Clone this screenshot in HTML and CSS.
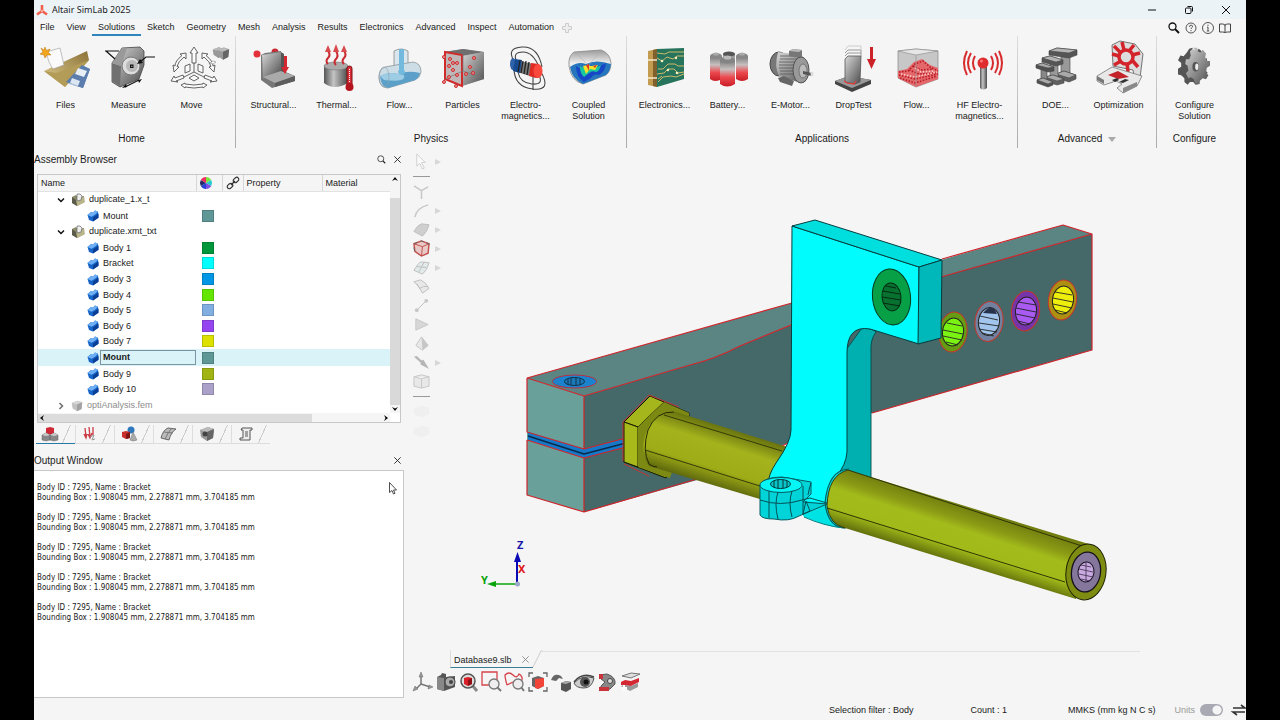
FILE: index.html
```html
<!DOCTYPE html>
<html lang="en">
<head>
    <meta charset="UTF-8">
    <meta name="viewport" content="width=device-width, initial-scale=1.0">
    <title>Altair SimLab 2025</title>
    <link rel="stylesheet" href="styles.css">
</head>
<body>
    <!-- Shared gradients and symbols -->
    <svg class="defs" aria-hidden="true">
        <defs>
            <linearGradient id="metal" x1="0" y1="0" x2="1" y2="1"><stop offset="0" stop-color="#d8d8d8"/><stop offset="1" stop-color="#4c4c4c"/></linearGradient>
            <linearGradient id="metalH"><stop offset="0" stop-color="#555"/><stop offset=".4" stop-color="#c4c4c4"/><stop offset="1" stop-color="#4a4a4a"/></linearGradient>
            <linearGradient id="tan" x1="0" y1="1" x2="1" y2="0"><stop offset="0" stop-color="#e0cd91"/><stop offset="1" stop-color="#8c7338"/></linearGradient>
            <linearGradient id="cell" x1="0" y1="0" x2="0" y2="1"><stop offset="0" stop-color="#777"/><stop offset=".35" stop-color="#c6c0c0"/><stop offset=".65" stop-color="#ed4a50"/><stop offset="1" stop-color="#c91c25"/></linearGradient>
            <linearGradient id="glass" x1="0" y1="0" x2="0" y2="1"><stop offset="0" stop-color="#9a9a9a"/><stop offset=".4" stop-color="#f0f0f0"/><stop offset="1" stop-color="#bcc4ca"/></linearGradient>
            <linearGradient id="shaftNear" gradientUnits="userSpaceOnUse" x1="704" y1="421" x2="686" y2="478"><stop offset="0" stop-color="#6a7410"/><stop offset=".3" stop-color="#a4b31c"/><stop offset=".7" stop-color="#9eac17"/><stop offset="1" stop-color="#5c660d"/></linearGradient>
            <linearGradient id="shaftFar" gradientUnits="userSpaceOnUse" x1="966" y1="506" x2="948" y2="562"><stop offset="0" stop-color="#717d0f"/><stop offset=".25" stop-color="#8b9b15"/><stop offset=".4" stop-color="#a3bb1b"/><stop offset=".72" stop-color="#a2ba19"/><stop offset="1" stop-color="#5e6a0c"/></linearGradient>
        </defs>
        <symbol id="body" viewBox="0 0 12 12">
            <path d="M.5 5 4 2l2 .8L8 .5l3 1.200.5 6L6 11.500 2 10z" fill="#1765c9"/>
            <path d="M.5 5 4 2l2 .8L8 .5l3 1.200-3 3-3.500 2z" fill="#6fb0f4"/>
            <path d="m6 7.500 5.500-4v4.200L6 11.500z" fill="#0b3f95"/>
        </symbol>
        <symbol id="file" viewBox="0 0 14 14">
            <path d="M1 4l4-2 2 2 6-1 .5 6L6 13 1 10z" fill="#8d8d6c"/>
            <path d="m5 7 8-3 .5 5.500L6 13z" fill="#b9b58a"/>
            <path d="M6 1h3l2 2-1 4-4 1z" fill="#eee" stroke="#666" stroke-width=".7"/>
            <path d="M1 4l4 3 1 6-5-3z" fill="#5b5b4b"/>
        </symbol>
        <symbol id="chev" viewBox="0 0 8 8"><path d="m1 2.500 3 3 3-3" fill="none" stroke="#111" stroke-width="1.500"/></symbol>
        <symbol id="cross" viewBox="0 0 10 10"><path d="m1.500 1.500 7 7m0-7-7 7" fill="none" stroke="currentColor"/></symbol>
        <symbol id="lens" viewBox="0 0 12 12"><path d="m8 8 3 3" stroke="currentColor" stroke-width="1.500"/><circle cx="5" cy="5" r="4" fill="none" stroke="currentColor"/></symbol>
        <symbol id="flyout" viewBox="0 0 6 8"><path d="m0 1 6 3-6 3z" fill="#bbb"/></symbol>
        <symbol id="cube" viewBox="0 0 16 16">
            <path d="m1 4 8-3 6 2-1 9-6 3-6-4z" fill="#999"/><path d="m1 4 8-3 6 2-7 3z" fill="#bbb"/><path d="m8 6 7-3-1 9-6 3z" fill="#666"/>
        </symbol>
    </svg>

    <div class="app">
        <header class="titlebar">
            <svg class="logo" viewBox="0 0 12 12"><path d="M6 7V1M6 7l-5 3.500M6 7l5 3.500" stroke="#f0604c" stroke-width="2.600" fill="none"/><circle cx="6" cy="7" r=".8" fill="#fff"/></svg>
            <h1>Altair SimLab 2025</h1>
            <div class="window-buttons">
                <button aria-label="Minimize"><svg viewBox="0 0 10 10"><path d="M1 5h8" stroke="#111"/></svg></button>
                <button aria-label="Restore"><svg viewBox="0 0 10 10"><rect x="1.500" y="3" width="5.500" height="5.500" rx="1" fill="none" stroke="#111"/><path d="M3.500 1.500h4q1 0 1 1v4" fill="none" stroke="#111"/></svg></button>
                <button aria-label="Close"><svg viewBox="0 0 10 10"><path d="m1 1 8 8m0-8L1 9" stroke="#111"/></svg></button>
            </div>
        </header>

        <nav class="menubar">
            <a href="#">File</a>
            <a href="#">View</a>
            <a href="#" class="active">Solutions</a>
            <a href="#">Sketch</a>
            <a href="#">Geometry</a>
            <a href="#">Mesh</a>
            <a href="#">Analysis</a>
            <a href="#">Results</a>
            <a href="#">Electronics</a>
            <a href="#">Advanced</a>
            <a href="#">Inspect</a>
            <a href="#">Automation</a>
            <button class="add-tab" aria-label="Add ribbon"><svg viewBox="0 0 10 10"><path d="M3.500.5h3v3h3v3h-3v3h-3v-3h-3v-3h3z" fill="#eee" stroke="#ccc"/></svg></button>
            <div class="help-buttons">
                <button aria-label="Search"><svg viewBox="0 0 12 12"><circle cx="4.500" cy="4.500" r="3.500" fill="none" stroke="#111" stroke-width="1.300"/><path d="m7 7 4 4" stroke="#111" stroke-width="2"/></svg></button>
                <button aria-label="Help"><svg viewBox="0 0 12 12"><circle cx="6" cy="6" r="5" fill="none" stroke="#555"/><path d="M4.500 5q0-2 1.700-1.800T7.500 5Q6 6 6 7M6 8v1.200" fill="none" stroke="#555"/></svg></button>
                <button aria-label="About"><svg viewBox="0 0 12 12"><circle cx="6" cy="6" r="5.500" fill="none" stroke="#555"/><path d="M6 5v4M6 2.700V4M5 5.200h1M4.800 9h2.400" fill="none" stroke="#555"/></svg></button>
                <button aria-label="Manual"><svg viewBox="0 0 12 12"><path d="M.5 2h3Q6 2 6 3.500 6 2 8.500 2h3v8h-3Q6 10 6 11 6 10 3.500 10h-3zM6 3v8" fill="none" stroke="#444"/></svg></button>
            </div>
        </nav>

        <section class="ribbon">
            <div class="ribbon-group ribbon-home">
                <div class="ribbon-items">
                    <button class="tool">
                        <svg viewBox="0 0 48 48">
                            <path d="m38 21 10 4-7 19-17-5z" fill="#5c7eae"/><path d="m35 23 9 3-3 7-9-3z" fill="#e8eef5"/><path d="m29 34 8 3-2 5-9-2z" fill="#dce6f2"/>
                            <path d="m2 27 43-20 2 9-24 27z" fill="url(#tan)"/><path d="m2 27 12 2 33-13-24 27z" fill="#b39b58"/>
                            <path d="m24 38 16-17 8 4-7 19z" fill="#5c7eae"/><path d="m36 24 9 3-3 6-9-3z" fill="#e8eef5"/><path d="m30 34 8 3-2 5-8-3z" fill="#dce6f2"/>
                            <path d="m4 8 14-4 4 17-11 4q-4-5-7-17z" fill="#fafafa" stroke="#999" stroke-width=".6"/>
                            <path d="m3 3 1.500 3.500L8 5 6.500 8.500 9 11H5L3 14l-1-3-4-1 3-2-2-4 3 2z" fill="#f3a51b" stroke="#b87410" stroke-width=".5"/>
                        </svg>
                        <span>Files</span>
                    </button>
                    <button class="tool">
                        <svg viewBox="0 0 48 48">
                            <path d="m7 19 10-15 18-1 4 4v14l-5 14-19 8-8-5z" fill="url(#metal)" stroke="#444" stroke-width=".8"/>
                            <path d="m7 19 9 3-1 20-8-5z" fill="#707070"/><path d="m7 19 10-15h5l-6 18z" fill="#999"/>
                            <circle cx="26" cy="22" r="9" fill="#ddd" stroke="#777"/><circle cx="27" cy="22" r="6" fill="#b9b9b9"/>
                            <rect x="25" y="20.500" width="3.500" height="3.500" fill="#111"/><rect x="26.300" y="21.800" width="1" height="1" fill="#fff"/>
                            <path d="M0 7h14M1 7l9 8M50 13h-9l-6 5m-15 25 14-7" fill="none" stroke="#111" stroke-width="1.200"/>
                            <path d="m32 20 3-5 3 4zM17 44l4-4 1 3zm20-9-4 1 1 3z" fill="#111"/>
                        </svg>
                        <span>Measure</span>
                    </button>
                    <button class="tool">
                        <svg viewBox="0 0 48 48">
                            <g fill="#fafafa" stroke="#555" stroke-width=".9" stroke-linejoin="round">
                                <path d="m26 3 4 6h-2v10h-4V9h-2z"/>
                                <path d="m18 9-6 1 2 1.500Q7 17 7 22l-2-1 1 7 5-5-2-.500q1-5 7-9.500l2 2z"/>
                                <path d="m34 9 6 1-2 1.500q7 5.500 7 10.500l2-1-1 7-5-5 2-.500q-1-5-7-9.500l-2 2z"/>
                                <path d="m3 37 3-5 1 2 8-3 1 3-8 3 2 1zM49 37l-3-5-1 2-8-3-1 3 8 3-2 1z"/>
                                <path d="m13 41 4-2v1q9 2 18 0v-1l4 2-4 3v-1q-9 2-18 0v1z"/>
                                <path d="m17 22 5-2v7l-5 2zM30 20l5 2v7l-5-2zM26 31l5 3-5 3-5-3z"/>
                                <path d="M26 19v9M26 28l-10 5M26 28l10 5" fill="none"/>
                            </g>
                            <use href="#cube" x="44" y="1" width="12" height="15"/><use href="#cube" x="48" y="1" width="14" height="17"/>
                            <path d="m42 19 3-2 3 1-3 2z" fill="#fff" stroke="#888" stroke-width=".6"/>
                        </svg>
                        <span>Move</span>
                    </button>
                </div>
                <h2>Home</h2>
            </div>

            <div class="ribbon-group">
                <div class="ribbon-items">
                    <button class="tool">
                        <svg viewBox="0 0 48 48">
                            <circle cx="7" cy="10" r="3.500" fill="#e33039"/><circle cx="25" cy="8" r="3.500" fill="#c92932"/>
                            <path d="m11 11 4-2 16-2v19l14 6v5l-23 7-11-8z" fill="#777"/><path d="m12 11 19-3v19l-18 7z" fill="url(#metal)"/>
                            <path d="m31 27 14 5-20 7-12-6z" fill="#aaa"/><path d="m25 39 20-7v5l-20 6z" fill="#5d5d5d"/><path d="m31 8 3 2v18l-3-1z" fill="#555"/>
                            <path d="M34 12h3v11h2l-4 7-4-7h3z" fill="#d4272f"/>
                        </svg>
                        <span>Structural...</span>
                    </button>
                    <button class="tool">
                        <svg viewBox="0 0 48 48">
                            <path d="M11 22v17q10 8 24 0V22z" fill="url(#metalH)"/><ellipse cx="23" cy="22" rx="12" ry="4" fill="#aaa" stroke="#777" stroke-width=".6"/>
                            <g fill="none" stroke="#c92b31" stroke-width="2"><path d="M15 20q-3-3 0-6t0-7M23 21q-3-3 0-6t0-8M31 20q-3-3 0-6t0-7"/></g>
                            <path d="m15 1 3 7h-6zM23 0l3 8h-6zM31 1l3 7h-6z" fill="#d84a4e"/>
                            <rect x="34" y="22" width="5" height="22" rx="2.500" fill="#d92e38" stroke="#7a1015"/><circle cx="36.500" cy="43" r="4" fill="#b3141d"/><path d="M36.500 25v14" stroke="#fff" stroke-dasharray="1 1"/>
                        </svg>
                        <span>Thermal...</span>
                    </button>
                    <button class="tool">
                        <svg viewBox="0 0 48 48">
                            <path d="M18 7q7-4 14 0v16H18z" fill="#d9e6ed" stroke="#888" stroke-width=".8"/>
                            <path d="M9 23 37 18q8 1 8 10-1 6-6 8l-27 8q-8 0-9-10 0-9 6-11z" fill="#cddde6" stroke="#8b979d" stroke-width=".8"/>
                            <path d="M4 32q9-5 18-2 10-4 22-1-1 5-5 7l-27 8q-7-1-8-12z" fill="#5ba0c8"/><path d="M4 32q9-5 18-2 8 0 6 4t-20 2z" fill="#9dcde4"/>
                            <path d="M23 5h5v21q3 3-2 5-6-2-3-5z" fill="#73b8dd"/><ellipse cx="8" cy="33" rx="5" ry="10" fill="none" stroke="#8ba0ab" stroke-width=".6"/>
                        </svg>
                        <span>Flow...</span>
                    </button>
                    <button class="tool">
                        <svg viewBox="0 0 48 48">
                            <path d="M5 8 24 5l21 3v27L23 42 5 35z" fill="#aaa"/><path d="m5 8 19-3 21 3-22 4z" fill="#6e6e6e"/><path d="m23 12 22-4v27l-22 7z" fill="url(#metal)"/>
                            <path d="m6 8 17 3v31L6 35z" fill="#c0b8b8" stroke="#cf2b2b" stroke-width="2"/><path d="M24 5v22l21 8M24 27 6 35" stroke="#777" fill="none" stroke-width=".7"/>
                            <g fill="#e69b9b" stroke="#cf2b2b" stroke-width="1"><circle cx="5" cy="13" r="1.500"/><circle cx="11" cy="15" r="1.500"/><circle cx="18" cy="19" r="1.500"/><circle cx="10" cy="22" r="1.500"/><circle cx="14" cy="26" r="1.500"/><circle cx="18" cy="31" r="1.500"/><circle cx="10" cy="33" r="1.500"/><circle cx="5" cy="38" r="1.500"/><circle cx="17" cy="42" r="1.500"/><circle cx="27" cy="30" r="1.500"/><circle cx="31" cy="23" r="1.500"/><circle cx="35" cy="14" r="1.500"/><circle cx="34" cy="29" r="1.500"/><circle cx="14" cy="19" r="1.500"/></g>
                        </svg>
                        <span>Particles</span>
                    </button>
                    <button class="tool">
                        <svg viewBox="0 0 48 48">
                            <g fill="none" stroke="#444" stroke-width="1.100"><path d="M12 17Q4 4 20 3t20 20M14 16Q11 8 21 8t16 15M12 24Q12 43 31 45t8-17M16 28q2 11 14 12t7-9M31 32v14"/></g>
                            <path d="M13 16 36 21q5 2 4 7-2 6-6 6L12 27q-4-3-3-7 1-4 4-4z" fill="#777"/>
                            <ellipse cx="11" cy="20" rx="3" ry="6" fill="#2e62a9"/><path d="m13 15 7 1-2 13-7-2z" fill="#174b91"/>
                            <g stroke="#222" stroke-width="1.300"><path d="m18 16-2 12M21 17l-2 12M24 17l-2 13M27 18l-2 13"/></g>
                            <path d="m29 19 8 1-2 14-8-2z" fill="#e02b25"/><ellipse cx="36" cy="27" rx="4.500" ry="7" fill="#fa493d"/>
                        </svg>
                        <span>Electro-<br>magnetics...</span>
                    </button>
                    <button class="tool">
                        <svg viewBox="0 0 48 48">
                            <path d="M9 8 36 6q9 3 10 13 0 8-5 12L18 40Q6 37 4 22 3 12 9 8z" fill="url(#glass)" stroke="#888" stroke-width=".8"/>
                            <path d="M5 23q8-6 16-3 10-5 25 0-1 8-5 11L18 40Q7 35 5 23z" fill="#2676bd"/>
                            <path d="M11 22q7 6 12-2 9 5 18-1-1 9-7 12-5-2-8 3l-7 4q-8-5-8-16z" fill="#1746c6"/>
                            <path d="M15 22q4 4 8-1 8 4 13 0-2 7-5 7-4-2-7 1l-5 4q-4-3-4-11z" fill="#18c79f"/>
                            <path d="m18 22 5-1 3 1 7-1-3 5-5-1-4 5z" fill="#f4e12a"/><path d="m21 21 3-1v7zM28 22l4-1-2 3z" fill="#e63223"/>
                            <path d="m11 9 12 12M36 6 24 21" stroke="#aaa" stroke-width=".5"/>
                        </svg>
                        <span>Coupled<br>Solution</span>
                    </button>
                </div>
                <h2>Physics</h2>
            </div>

            <div class="ribbon-group">
                <div class="ribbon-items">
                    <button class="tool">
                        <svg viewBox="0 0 48 48">
                            <path d="m16 5 27-1v31l-27 8z" fill="#25745b"/><path d="m7 7 9-2v38l-9-2z" fill="#c49c4f"/><path d="M16 5v38l-4-1V6z" fill="#80602c"/><path d="M7 16h9M7 34h9" stroke="#f6e9ca" stroke-width="1.500"/>
                            <g fill="none" stroke="#cfb96c" stroke-width="1"><path d="m16 9 8 1 4-2 15 0M16 14l5 3 5-4 6 2 4-3h7M17 25h5l5-5h7l3 2h6M16 30l7-1 4-4h6l4 4 6-1M17 38l5-5 8-1 5 1 8-3M17 35l4-3"/></g>
                            <g fill="#f7efc0"><circle cx="21" cy="17" r="1.300"/><circle cx="35" cy="14" r="1.200"/><circle cx="27" cy="26" r="1.200"/><circle cx="36" cy="29" r="1.300"/></g>
                        </svg>
                        <span>Electronics...</span>
                    </button>
                    <button class="tool">
                        <svg viewBox="0 0 48 48">
                            <path d="M19 10q6-4 12 0v25H19z" fill="url(#cell)"/><ellipse cx="25" cy="10" rx="6" ry="2.500" fill="#555"/>
                            <path d="M6 12v23q5 4 12 0V12z" fill="url(#cell)"/><ellipse cx="12" cy="12" rx="6" ry="3" fill="#888"/><ellipse cx="12" cy="10" rx="3" ry="1.500" fill="#aaa"/>
                            <path d="M32 12v23q6 4 12 0V12z" fill="url(#cell)"/><ellipse cx="38" cy="12" rx="6" ry="3" fill="#888"/><ellipse cx="38" cy="10" rx="3" ry="1.500" fill="#aaa"/>
                            <path d="M16 16v24q7 5 15 0V16z" fill="url(#cell)"/><ellipse cx="23.500" cy="16" rx="7.500" ry="3.500" fill="#848484"/><ellipse cx="23.500" cy="13.500" rx="4" ry="2" fill="#bbb"/>
                        </svg>
                        <span>Battery...</span>
                    </button>
                    <button class="tool">
                        <svg viewBox="0 0 48 48">
                            <ellipse cx="12" cy="20" rx="9" ry="12" fill="#777" stroke="#444"/>
                            <path d="m11 8 23 3q9 7 8 18-2 10-8 10l-22-7q-5-9-1-24z" fill="url(#metal)"/>
                            <path d="M13 12h17M13 15h18M12 18h19M12 21h19M12 24h18M13 27h16M13 30h17" stroke="#555" stroke-width=".8"/>
                            <path d="m22 7 4-2 9 1v6l-3 2-10-2z" fill="#777"/><path d="m22 7 4-2 9 1-3 2z" fill="#bbb"/>
                            <ellipse cx="34" cy="26" rx="8" ry="13" fill="#999" stroke="#444" stroke-width=".8"/><ellipse cx="36" cy="27" rx="4" ry="7" fill="#bbb" stroke="#666" stroke-width=".8"/>
                            <path d="m36 27 9 2v3l-9-2z" fill="#555"/><ellipse cx="45" cy="30" rx="1.500" ry="2.500" fill="#ddd"/>
                            <path d="m11 34 6-2 10 5-2 5-12-4z" fill="#666"/>
                        </svg>
                        <span>E-Motor...</span>
                    </button>
                    <button class="tool">
                        <svg viewBox="0 0 48 48">
                            <path d="m5 37 14-5 22 4v4l-19 8-17-8z" fill="#444"/><path d="m5 37 14-5 22 4-19 8z" fill="#999"/>
                            <path d="m15 15 3-3h13l-1 26-5 2-10-2z" fill="url(#metal)" stroke="#555" stroke-width=".8"/><path d="m14 37 3 2 7 1 2-3" fill="none" stroke="#ee3a3a" stroke-width="1.200"/>
                            <g fill="none" stroke="#999" stroke-width="1"><path d="m15 12 3-3h13v3M15 9l3-3h13v3"/><path d="m15 6 3-4h13v4" stroke="#ccc"/></g>
                            <path d="M40 3h3v12h3l-4.500 10L37 15h3z" fill="#cc2229"/>
                        </svg>
                        <span>DropTest</span>
                    </button>
                    <button class="tool">
                        <svg viewBox="0 0 48 48">
                            <path d="m5 7 18-2 22 2v28l-22 8L5 34z" fill="#c7c7c7" stroke="#888" stroke-width=".7"/><path d="m5 7 18-2 22 2-22 4z" fill="#e6e6e6" stroke="#888" stroke-width=".6"/>
                            <path d="m5 27 9-2 7-7 8-3 8 6 8 3v11l-22 8-18-9z" fill="#e4676a"/>
                            <g fill="none" stroke-width="1.600" stroke-dasharray="1.500 1.500"><path d="m6 28 9-1 7-7 8-3 7 6 8 4M6 31l16 4 23-5M7 34l15 5 22-7M16 26l10 4 17-1M20 22l8 4 12-1" stroke="#b71c26"/><path d="m8 30 14 3 22-5M22 24l6 4 14-1" stroke="#ffc9c4"/></g>
                            <path d="M23 11v31" stroke="#999" stroke-width=".7"/>
                        </svg>
                        <span>Flow...</span>
                    </button>
                    <button class="tool">
                        <svg viewBox="0 0 48 48">
                            <path d="M24 22h7v22q-4 3-7 0z" fill="url(#metalH)"/><circle cx="27" cy="19" r="5.500" fill="#df2d2d"/><circle cx="25.500" cy="17" r="1.500" fill="#f77"/>
                            <g fill="none" stroke="#d82b2e" stroke-width="2"><path d="M19 12q-4 7 0 14M15 9q-6 10 0 20M11 7q-6 12 0 24M35 12q4 7 0 14M39 9q6 10 0 20M43 7q6 12 0 24"/></g>
                        </svg>
                        <span>HF Electro-<br>magnetics...</span>
                    </button>
                </div>
                <h2>Applications</h2>
            </div>

            <div class="ribbon-group">
                <div class="ribbon-items">
                    <button class="tool">
                        <svg viewBox="0 0 48 48">
                            <!-- three I-beams, back to front -->
                            <g stroke="#444" stroke-width=".6">
                                <path d="m29 9 9 2v19l-9-2z" fill="#999"/><path d="m17 7 8-3 20 2v5l-8 3-20-3z" fill="#555"/><path d="m17 7 8-3 20 2-8 3z" fill="#b5b5b5"/><path d="m24 30 8-3 12 4v4l-7 3-13-4z" fill="#606060"/><path d="m24 30 8-3 12 4-7 3z" fill="#aaa"/>
                                <path d="m18 18 8 2v14l-8-2z" fill="#999"/><path d="m10 14 8-2 13 4v4l-7 2-14-4z" fill="#555"/><path d="m10 14 8-2 13 4-7 2z" fill="#b5b5b5"/><path d="m13 33 8-2 11 4v4l-7 2-12-4z" fill="#606060"/><path d="m13 33 8-2 11 4-7 2z" fill="#aaa"/>
                                <path d="m9 24 6 2v12l-6-2z" fill="#888"/><path d="m4 21 6-2 12 4v4l-6 1-12-4z" fill="#505050"/><path d="m4 21 6-2 12 4-6 1z" fill="#aaa"/><path d="m5 36 6-2 10 4v3l-5 2-11-4z" fill="#505050"/><path d="m5 36 6-2 10 4-5 2z" fill="#aaa"/>
                            </g>
                        </svg>
                        <span>DOE...</span>
                    </button>
                    <button class="tool">
                        <svg viewBox="0 0 48 48">
                            <path d="m17 1 8-4 15 3 8 10-3 24-6-2-1-6-20-4z" fill="#ddd" stroke="#555" stroke-width=".8"/>
                            <g stroke="#d4242b" stroke-width="3.500" fill="none"><circle cx="31" cy="13" r="7"/><path d="m25 8-6-6M29 6l-2-8M34 7l5-6M37 11l8-2M37 16l6 7M32 19l1 9M26 17l-7 4M24 12l-7-2"/></g>
                            <path d="m2 32 15-9 30 9-5 10-14 7-6-5 5-4-6-3-12 4-7-4z" fill="#e8e8e8" stroke="#777" stroke-width=".8"/><path d="m13 31 10-4 11 6-11 2z" fill="#c4232a"/><path d="m17 36 5-2 2 2-4 2zM24 38l6-3 4 1-6 3z" fill="#333"/><path d="m2 32 0 4 7 4v-4z" fill="#777"/><path d="m28 44 14-6v4l-14 7z" fill="#888"/>
                        </svg>
                        <span>Optimization</span>
                    </button>
                </div>
                <h2>Advanced <span class="caret"></span></h2>
            </div>

            <div class="ribbon-group">
                <div class="ribbon-items">
                    <button class="tool">
                        <svg viewBox="0 0 48 48">
                            <g transform="translate(3 0) scale(.8 .95)">
                                <path d="m19 5 4-1 1 4h4l3-3 4 3-1 4 3 4 4-1 1 6-4 2v4l4 3-3 5h-4l-3 3v4l-5 1-3-3h-4l-3 3-4-3v-4l-4-3-4-1v-6l4-2v-4l-4-3 3-5 4 1 4-4z" fill="#555"/>
                                <path d="m24 4 5 0 1 4 3 1 3-3 4 4-1 4 2 4 4 0v5l-4 2-1 5 3 3-3 4-4-1-4 3-1 3-5-1-1-4-4-2-3 1-3-5 3-3-1-5-3-2 1-5 4 0 2-4-1-4 3-3 4 2z" fill="url(#metal)"/>
                                <ellipse cx="27" cy="24" rx="4" ry="5" fill="#555"/><ellipse cx="28.500" cy="24" rx="2" ry="3.500" fill="#eee"/>
                            </g>
                        </svg>
                        <span>Configure<br>Solution</span>
                    </button>
                </div>
                <h2>Configure</h2>
            </div>
        </section>

        <main class="workspace">
            <aside class="side">
                <div class="panel-title">
                    <h2>Assembly Browser</h2>
                    <button aria-label="Find"><svg viewBox="0 0 12 12"><use href="#lens"/></svg></button>
                    <button aria-label="Close browser"><svg viewBox="0 0 10 10"><use href="#cross"/></svg></button>
                </div>
                <div class="tree">
                    <table>
                        <colgroup><col class="col-name"><col class="col-color"><col class="col-link"><col class="col-prop"><col></colgroup>
                        <thead>
                            <tr>
                                <th>Name</th>
                                <th class="center"><svg class="ico12" viewBox="0 0 12 12"><path d="M6 6V0a6 6 0 0 1 5.200 3z" fill="#7be33a"/><path d="m6 6 5.200-3a6 6 0 0 1 0 6z" fill="#22c9cf"/><path d="m6 6 5.200 3A6 6 0 0 1 6 12z" fill="#7d50e0"/><path d="M6 6v6A6 6 0 0 1 .8 9z" fill="#2840d8"/><path d="M6 6 .8 9a6 6 0 0 1 0-6z" fill="#222a66"/><path d="M6 6 .8 3A6 6 0 0 1 6 0z" fill="#ee2b62"/></svg></th>
                                <th class="center"><svg class="ico14" viewBox="0 0 14 14"><g fill="none" stroke="#333" stroke-width="1.200"><rect x="7" y="2" width="6" height="4" rx="2" transform="rotate(-40 10 4)"/><rect x="1" y="8" width="6" height="4" rx="2" transform="rotate(-40 4 10)"/><path d="m5 9 4-4"/></g></svg></th>
                                <th>Property</th>
                                <th>Material</th>
                            </tr>
                        </thead>
                        <tbody>
                            <tr class="lvl1"><td><svg class="twist"><use href="#chev"/></svg><svg class="ico14"><use href="#file"/></svg>duplicate_1.x_t</td><td></td><td></td><td></td><td></td></tr>
                            <tr class="lvl2"><td><svg class="ico12"><use href="#body"/></svg>Mount</td><td><i class="swatch mount"></i></td><td></td><td></td><td></td></tr>
                            <tr class="lvl1"><td><svg class="twist"><use href="#chev"/></svg><svg class="ico14"><use href="#file"/></svg>duplicate.xmt_txt</td><td></td><td></td><td></td><td></td></tr>
                            <tr class="lvl2"><td><svg class="ico12"><use href="#body"/></svg>Body 1</td><td><i class="swatch green"></i></td><td></td><td></td><td></td></tr>
                            <tr class="lvl2"><td><svg class="ico12"><use href="#body"/></svg>Bracket</td><td><i class="swatch cyan"></i></td><td></td><td></td><td></td></tr>
                            <tr class="lvl2"><td><svg class="ico12"><use href="#body"/></svg>Body 3</td><td><i class="swatch blue"></i></td><td></td><td></td><td></td></tr>
                            <tr class="lvl2"><td><svg class="ico12"><use href="#body"/></svg>Body 4</td><td><i class="swatch lime"></i></td><td></td><td></td><td></td></tr>
                            <tr class="lvl2"><td><svg class="ico12"><use href="#body"/></svg>Body 5</td><td><i class="swatch sky"></i></td><td></td><td></td><td></td></tr>
                            <tr class="lvl2"><td><svg class="ico12"><use href="#body"/></svg>Body 6</td><td><i class="swatch purple"></i></td><td></td><td></td><td></td></tr>
                            <tr class="lvl2"><td><svg class="ico12"><use href="#body"/></svg>Body 7</td><td><i class="swatch yellow"></i></td><td></td><td></td><td></td></tr>
                            <tr class="lvl2 selected"><td><div class="cell"><svg class="ico12"><use href="#body"/></svg><span class="focus">Mount</span></div></td><td><i class="swatch mount"></i></td><td></td><td></td><td></td></tr>
                            <tr class="lvl2"><td><svg class="ico12"><use href="#body"/></svg>Body 9</td><td><i class="swatch olive"></i></td><td></td><td></td><td></td></tr>
                            <tr class="lvl2"><td><svg class="ico12"><use href="#body"/></svg>Body 10</td><td><i class="swatch lilac"></i></td><td></td><td></td><td></td></tr>
                            <tr class="lvl1 muted"><td><svg class="twist closed"><use href="#chev"/></svg><svg class="ico12"><use href="#cube"/></svg>optiAnalysis.fem</td><td></td><td></td><td></td><td></td></tr>
                        </tbody>
                    </table>
                    <div class="vscroll"><svg viewBox="0 0 8 8"><path d="m1 6 3-4 3 4-3-1.500z"/></svg><span class="vthumb"></span><svg viewBox="0 0 8 8"><path d="m1 2 3 4 3-4-3 1.500z"/></svg></div>
                    <div class="hscroll"><span class="hthumb"><svg viewBox="0 0 8 8"><path d="M6 1 2 4l4 3-1.500-3z"/></svg></span><svg viewBox="0 0 8 8"><path d="m2 1 4 3-4 3 1.500-3z"/></svg></div>
                </div>

                <div class="tabs">
                    <button class="active" aria-label="Assembly"><svg viewBox="0 0 16 16"><path d="m4 2 4-1 4 1v5L8 9 4 7z" fill="#cf2836"/><path d="m0 9 4-2 4 2v5l-4 1-4-1zM8 9l4-2 4 2v5l-4 1-4-1z" fill="#888" stroke="#666" stroke-width=".5"/><path d="m0 9 4-2 4 2-4 1zM8 9l4-2 4 2-4 1z" fill="#ccc"/></svg></button>
                    <button aria-label="Loads"><svg viewBox="0 0 16 16"><path d="m3 2 1 9m-2-3 2 4 1-4M7 1l1 10M6 8l2 4 2-5M11 1l0 8" fill="none" stroke="#cc3c46" stroke-width="1.300"/><path d="m8 11 4-2-2 5 3-1" fill="none" stroke="#999"/></svg></button>
                    <button aria-label="Shapes"><svg viewBox="0 0 16 16"><circle cx="10" cy="4" r="3.500" fill="#2f78bd"/><path d="m1 6 4-1 4 1v6l-4 1-4-2z" fill="#c8302b"/><path d="m5 8 4-2v6l-4 1z" fill="#7f1515"/><path d="m12 6 4 8q-4 2-7 0z" fill="#aaa" stroke="#777" stroke-width=".5"/></svg></button>
                    <button aria-label="Mesh"><svg viewBox="0 0 16 16"><path d="M1 12Q3 4 8 2l8 1q-5 3-7 11z" fill="#bbb" stroke="#666"/><path d="m4 6 9 1M12 2Q8 6 5 13" fill="none" stroke="#777"/></svg></button>
                    <button aria-label="Model"><svg viewBox="0 0 16 16"><use href="#cube"/><circle cx="6" cy="8" r="2.500" fill="#444"/></svg></button>
                    <button aria-label="History"><svg viewBox="0 0 16 16"><path d="M4 2h10v2h-2v10H2v-2h3V4H3zM7 6h3M7 8h3M7 10h3" fill="#eee" stroke="#555"/></svg></button>
                </div>

                <div class="panel-title output-title">
                    <h2>Output Window</h2>
                    <button aria-label="Close output"><svg viewBox="0 0 10 10"><use href="#cross"/></svg></button>
                </div>
                <div class="output">
                    <p>Body ID : 7295, Name : Bracket<br>Bounding Box : 1.908045 mm, 2.278871 mm, 3.704185 mm</p>
                    <p>Body ID : 7295, Name : Bracket<br>Bounding Box : 1.908045 mm, 2.278871 mm, 3.704185 mm</p>
                    <p>Body ID : 7295, Name : Bracket<br>Bounding Box : 1.908045 mm, 2.278871 mm, 3.704185 mm</p>
                    <p>Body ID : 7295, Name : Bracket<br>Bounding Box : 1.908045 mm, 2.278871 mm, 3.704185 mm</p>
                    <p>Body ID : 7295, Name : Bracket<br>Bounding Box : 1.908045 mm, 2.278871 mm, 3.704185 mm</p>
                    <svg class="pointer" viewBox="0 0 8 13"><path d="M.5.5v10L3 8.500l1.500 3.500 1.500-.700L4.500 8h3z" fill="#fff" stroke="#222" stroke-width=".8"/></svg>
                </div>
            </aside>

            <div class="stage">
                <div class="canvas-row">
                    <div class="pick-tools">
                        <button class="faint" aria-label="Select"><svg viewBox="0 0 18 18"><path d="M4 1v13l3-3 3 6 2-1-3-6h4z" fill="#fff" stroke="#aaa"/></svg><svg class="flyout"><use href="#flyout"/></svg></button>
                        <hr>
                        <button class="faint" aria-label="Vertex"><svg viewBox="0 0 18 18"><path d="m1 3 8 5v9M9 8l7-4" fill="none" stroke="#999" stroke-width="1.500"/></svg></button>
                        <button class="faint" aria-label="Edge"><svg viewBox="0 0 18 18"><path d="M2 16Q4 6 16 3" fill="none" stroke="#999" stroke-width="1.500"/></svg><svg class="flyout"><use href="#flyout"/></svg></button>
                        <button class="faint" aria-label="Face"><svg viewBox="0 0 18 18"><path d="M1 11Q5 4 9 3l8 1q-2 8-7 12z" fill="#aaa" stroke="#888"/></svg><svg class="flyout"><use href="#flyout"/></svg></button>
                        <button aria-label="Body"><svg viewBox="0 0 18 18"><path d="m1 4 8-3 8 3-1 10-7 3-7-5z" fill="#e9c9c7" stroke="#c14e4a" stroke-width="1.500"/><path d="m1 4 9 3 7-3M10 7l-1 10" fill="none" stroke="#c14e4a"/><path d="m1 4 8-3 8 3v2M1 8l1 5" fill="none" stroke="#666" stroke-dasharray="4 3"/></svg><svg class="flyout faint"><use href="#flyout"/></svg></button>
                        <button class="faint" aria-label="Element"><svg viewBox="0 0 18 18"><path d="M1 12Q5 5 8 3l9 1q-2 8-7 12zM4 8l10 1M12 3 6 14" fill="#cfdee3" stroke="#888"/></svg><svg class="flyout"><use href="#flyout"/></svg></button>
                        <button class="faint" aria-label="Element face"><svg viewBox="0 0 18 18"><path d="m1 4 7-2q5 2 9 9l-7 5Q7 9 1 4z" fill="#ddd" stroke="#888"/><path d="m4 6 3 5q4-3 9-2" fill="none" stroke="#888"/></svg></button>
                        <button class="faint" aria-label="Line"><svg viewBox="0 0 18 18"><path d="M4 14 14 4" stroke="#888"/><circle cx="4" cy="14" r="2" fill="#999"/><circle cx="14" cy="4" r="2" fill="#999"/></svg></button>
                        <button class="faint" aria-label="Triangle"><svg viewBox="0 0 18 18"><path d="m3 3 13 6-13 6z" fill="#bbb" stroke="#999"/></svg></button>
                        <button class="faint" aria-label="Solid"><svg viewBox="0 0 18 18"><path d="m9 2 7 9-6 5-7-5z" fill="#ddd" stroke="#999"/><path d="m9 2 1 14 6-5z" fill="#999"/></svg></button>
                        <button class="faint" aria-label="Pipette"><svg viewBox="0 0 18 18"><path d="m1 3 3-1 5 5 2-1 6 10-9-5 0-2z" fill="#777"/></svg><svg class="flyout"><use href="#flyout"/></svg></button>
                        <button class="faint" aria-label="Box"><svg viewBox="0 0 18 18"><path d="m1 4 8-2 8 2v10l-8 2-8-2zM1 4l8 2 8-2M9 6v10" fill="#ddd" stroke="#999"/></svg></button>
                        <hr>
                        <button class="ghost" aria-label="Group"><svg viewBox="0 0 18 18"><path d="m1 6 8-3 8 2v7l-8 3-8-3z" fill="#999"/></svg></button>
                        <button class="ghost" aria-label="Ungroup"><svg viewBox="0 0 18 18"><path d="m1 7 8-3 8 2v7l-8 3-8-3z" fill="#999"/></svg></button>
                    </div>

                    <!-- Model view -->
                    <svg class="model" viewBox="450 150 796 500" preserveAspectRatio="xMinYMin meet" stroke-linejoin="round">
                        <!-- mount arm -->
                        <path d="M527 378 580 363 792 303 815 296 1063 225 1092 234 920 284 791 325 740 346Q715 359 690 365L584 396z" fill="#5a8582"/>
                        <path d="M584 396 690 365Q715 359 740 346L791 325Q850 303 941 277L1092 234V350L872 413 780 446Q740 468 697 480L584 512z" fill="#456868"/>
                        <path d="m527 378 57 18v116l-57-17z" fill="#69a09a"/>
                        <path d="m528 432 56 17 42-11v9l-42 11-56-18z" fill="#1679c7"/>
                        <path d="m528 436 56 18 42-11" fill="none" stroke="#092a4c" stroke-width="1.500"/>
                        <g fill="none" stroke="#cf252b" stroke-width="1.200">
                            <path d="m527 378 53-15 212-60M527 378l57 18 106-31Q715 359 740 346L791 325M941 277l151-43V350L872 413M942 259l121-34 29 9M527 378V432l57 17v-53M584 449l42-11M527 440V495l57 17v-54l-57-18M584 458l42-11M584 512l113-33M776 449l12-6"/>
                        </g>
                        <ellipse cx="574.500" cy="381.500" rx="22" ry="6.500" fill="#1b83cd" stroke="#b82f42"/><ellipse cx="574.500" cy="381.500" rx="10" ry="4" fill="#1c79b7" stroke="#102f45"/><path d="M568 379v6M571 378v7M576 378v7M580 379v6" stroke="#12344e"/>
                        <!-- holes in the arm -->
                        <g class="hole"><ellipse cx="953" cy="332" rx="14" ry="20" fill="#659c13"/><ellipse cx="953" cy="332" rx="10.500" ry="14" fill="#7af313"/></g>
                        <g class="hole"><ellipse cx="989" cy="321.500" rx="14" ry="20" fill="#72819f"/><ellipse cx="989" cy="321.500" rx="10.500" ry="14" fill="#a2c5ed"/><path d="M983 313q9-11 14 1z" fill="#263249"/></g>
                        <g class="hole"><ellipse cx="1025.500" cy="311" rx="14" ry="20" fill="#7733a8"/><ellipse cx="1026" cy="311" rx="10.500" ry="14" fill="#a95bf1"/></g>
                        <g class="hole"><ellipse cx="1062.500" cy="300" rx="14" ry="20" fill="#ad9012"/><ellipse cx="1063" cy="300" rx="10.500" ry="14" fill="#eeee0d"/></g>
                        <path d="M947 323 962 326M943 330l20 4M943 336l19 4M946 342l12 3M980 316l18 4M979 323l20 3M979 329l18 3M982 333l12 3M1018 302l18 3M1016 308l20 4M1016 314l19 4M1018 321l12 3M1055 292l17 3M1053 298l20 4M1053 304l19 4M1055 310l12 3" stroke="#242424" stroke-width=".9"/>
                        <!-- hex nut and near shaft -->
                        <path d="m624 422 26-26 39 17v9l-23 56-42-16z" fill="#8a9913" stroke="#151900"/>
                        <path d="m624 422 26-26 14 6-26 25z" fill="#a5b51c" stroke="#151900"/><path d="m624 422 14 5v40l-14-5z" fill="#a8b91b" stroke="#151900"/>
                        <path d="m638 427 26-25 25 11v9l-19 56-32-11z" fill="#7c8913"/>
                        <path d="M623 461v-39l26-27 30 12" fill="none" stroke="#c43434" stroke-width="1"/><path d="m624 464 25 12" stroke="#c43434"/>
                        <path d="M676 412 800 451V511L649 466Q640 455 645 436 653 411 676 412z" fill="url(#shaftNear)"/>
                        <path d="M674 412q-18-1-26 18-6 20 1 34 4 3 8 3" fill="none" stroke="#252a04"/>
                        <path d="m664 415 118 36M645 450l118 37" stroke="#343a08"/>
                        <!-- bracket -->
                        <path d="M862 328q10 0 14 4-6 8-5 20V480L815 484 846 440V350z" fill="#00b0b0" stroke="#04494b" stroke-width=".9"/>
                        <path d="M792 226 919 267V344L870 329Q847 325 847 353V452Q846 465 837 475 827 486 826 503V522L768 490Q768 475 776 463 791 442 791 430z" fill="#00fcfc"/>
                        <path d="M768 485Q768 475 776 463 791 442 791 430L792 226 919 267V344L870 329Q847 325 847 353V452Q846 465 837 475" fill="none" stroke="#063e40"/>
                        <path d="m792 226 23-6 127 40-23 7z" fill="#00dede" stroke="#063e40"/><path d="m919 267 23-7-1 78-23 6z" fill="#00b8b9" stroke="#063e40"/>
                        <ellipse cx="891.500" cy="297" rx="19" ry="28" fill="#08a047" stroke="#063a1a" transform="rotate(-6 891 297)"/><ellipse cx="891.500" cy="297" rx="9.500" ry="14" fill="#08712f" stroke="#032a12" transform="rotate(-6 891 297)"/><path d="m883 291 17 3M882 297l19 3M883 303l17 3M886 286l10 2" stroke="#032a12"/>
                        <path d="M794 500 826 503 840 528Q830 527 804 517z" fill="#00e3e4"/>
                        <path d="M849 469Q828 470 825 503 828 528 846 528" fill="#00dcdd" stroke="#055c60" stroke-width="1.200"/><path d="M804 517q20 9 40 11" fill="none" stroke="#077e82"/>
                        <!-- clamp ears -->
                        <path d="M760 485q4-8 22-8l29 5v12l-8 8 24 2-21 9-7 3q-10 6-25 3-12 0-14-4z" fill="#00d4d8" stroke="#065b60"/>
                        <ellipse cx="781" cy="485" rx="21" ry="7.500" fill="#06f5f5" stroke="#065b60"/><ellipse cx="780.500" cy="484" rx="10" ry="4.500" fill="#0ac4c8" stroke="#04393c"/><path d="M774 481v6M778 480v8M783 480v8M787 481v6" stroke="#04393c"/>
                        <path d="M760 500q20 7 42 0l8-2 17 5M769 491v27M778 492q-4 12 0 27M792 491q-4 12 0 26M803 486v29M811 483q-2 6-3 12M803 514l3-13 4 10z" fill="none" stroke="#045055"/>
                        <!-- far shaft -->
                        <path d="M848 470 1092 545 1076 599 845 528Q830 525 827 506 828 475 848 470z" fill="url(#shaftFar)"/>
                        <path d="M848 470Q828 475 827 506 830 525 845 528" fill="none" stroke="#353b0a"/><path d="m848 470 234 76M827 508l238 74" stroke="#2f3606"/>
                        <g transform="rotate(8 1086 572)"><ellipse cx="1086" cy="572" rx="20" ry="28" fill="#7f8c12" stroke="#1c2002"/><ellipse cx="1086" cy="572" rx="14.500" ry="20" fill="#85779b" stroke="#17121f" stroke-width="1.300"/><ellipse cx="1086" cy="572" rx="8" ry="10" fill="#c9a9e0" stroke="#17121f"/></g>
                        <path d="m1081 565 10 2M1079 569l14 3M1079 574l14 3M1081 579l9 2M1086 562v20" stroke="#3a2d4a" stroke-width=".8"/>
                        <!-- axis triad -->
                        <path d="M517 584V560" stroke="#0808b5" stroke-width="2"/><path d="m517.500 552 3.500 10h-7z" fill="#0808b5"/>
                        <path d="M517 584H494" stroke="#0aa30a" stroke-width="1.500"/><path d="m487 584 9-3v6z" fill="#0aa30a"/><circle cx="517.500" cy="584" r="2.500" fill="#9ba9c6"/>
                        <g class="axis"><text x="517" y="549" fill="#1515a8">Z</text><text x="518" y="573" fill="#e01616">X</text><text x="481" y="584" fill="#0aa30a">Y</text></g>
                    </svg>
                </div>

                <div class="doc-tabs">
                    <div class="doc-tab">Database9.slb <button aria-label="Close document"><svg viewBox="0 0 10 10"><use href="#cross"/></svg></button></div>
                    <svg class="slant" viewBox="0 0 10 17"><path d="M0 17 8 1h2" fill="none" stroke="#ccc"/></svg>
                    <div class="doc-line"></div>
                </div>

                <div class="view-tools">
                    <button aria-label="Axes"><svg viewBox="0 0 20 20"><path d="M8 12V4M8 12l9 3M8 12l-5 5" stroke="#777" stroke-width="1.500" fill="none"/><path d="m8 0 2 5H6zM20 15l-5 2 1-4zM0 19l2-5 3 3z" fill="#999" stroke="#666" stroke-width=".5"/></svg></button>
                    <button aria-label="Capture"><svg viewBox="0 0 20 20"><path d="m1 5 4-2 1-2 4 1v3l9-1v11L8 19l-7-2z" fill="#555"/><path d="m1 5 7 1v13l-7-2z" fill="#888"/><circle cx="14" cy="10" r="5" fill="#aaa" stroke="#444"/><circle cx="15" cy="10" r="2" fill="#444"/></svg></button>
                    <button aria-label="Zoom body"><svg viewBox="0 0 20 20"><path d="m13 13 5 6" stroke="#888" stroke-width="3"/><circle cx="9" cy="9" r="7" fill="#ddd" stroke="#555" stroke-width="1.500"/><path d="m5 6 4-1 4 1v6l-4 2-4-2z" fill="#d91f27"/><path d="m9 8 4-2v6l-4 2z" fill="#8f1017"/></svg></button>
                    <button aria-label="Zoom window"><svg viewBox="0 0 20 20"><path d="M0 0h15v13H0z" fill="none" stroke="#d5444b" stroke-width="1.300"/><path d="m15 15 4 4" stroke="#777" stroke-width="2"/><circle cx="12" cy="12" r="5" fill="#eee" stroke="#777" stroke-width="1.300"/></svg></button>
                    <button aria-label="Zoom region"><svg viewBox="0 0 20 20"><path d="M2 13Q0 6 0 3 4-1 8 3t6-1q5 3 2 8M2 13l6-3" fill="none" stroke="#d5444b" stroke-width="1.300"/><path d="m16 15 3 4" stroke="#777" stroke-width="2"/><circle cx="13" cy="12" r="5" fill="#eee" stroke="#777" stroke-width="1.300"/></svg></button>
                    <button aria-label="Fit"><svg viewBox="0 0 20 20"><path d="M1 5V1h4M15 1h4v4M19 15v4h-4M5 19H1v-4" fill="none" stroke="#666" stroke-width="1.300"/><path d="m4 6 6-2 6 2v8l-6 3-6-3z" fill="#666"/><path d="m7 7 9-1v8l-6 3-3-1z" fill="#f24439"/></svg></button>
                    <button aria-label="Rotate"><svg viewBox="0 0 20 20"><path d="M0 8Q3 0 10 4l2 3-4-1-3 3z" fill="#666"/><path d="m10 11 5-2 5 1v7l-5 3-5-2z" fill="#555"/><path d="m10 11 5-2 5 1-5 2z" fill="#aaa"/></svg></button>
                    <button aria-label="Show"><svg viewBox="0 0 20 20"><path d="M0 11Q8 2 20 6 18 16 10 16T0 11z" fill="#ccc" stroke="#555"/><circle cx="11" cy="10" r="5" fill="#555"/><circle cx="12" cy="10" r="2.500" fill="#111"/><path d="M0 10Q8 0 20 5" fill="none" stroke="#444" stroke-width="1.500"/></svg></button>
                    <button aria-label="Section"><svg viewBox="0 0 20 20"><path d="m3 3 7-1q9 3 8 10l-5 5-9 1v-4l4-4-4-3z" fill="#888" stroke="#555"/><path d="m2 2 4 0v5H2zM2 15h10v4H2z" fill="#c9343c"/><circle cx="13" cy="9" r="2.500" fill="#ddd" stroke="#444"/></svg></button>
                    <button aria-label="Layers"><svg viewBox="0 0 20 20"><path d="m2 4 9-3 9 1-9 4z" fill="#ddd" stroke="#777"/><path d="m1 10 4-2 6 1 8-3v4l-8 4-10-1z" fill="#d42932"/><path d="m1 14 4-1 6 1 7-3v4l-8 4z" fill="#999"/><path d="M4 13v6M1 16h6" stroke="#fff" stroke-width="2"/></svg></button>
                </div>
            </div>
        </main>

        <footer class="statusbar">
            <span class="filter">Selection filter : Body</span>
            <span class="count">Count : 1</span>
            <span class="unit-system">MMKS (mm kg N C s)</span>
            <label class="units">Units <input type="checkbox" checked></label>
            <button aria-label="Swap units"><svg viewBox="0 0 14 12"><path d="M1 4h12L9 1M13 8H1l4 3" fill="none" stroke="#333" stroke-width="1.600"/></svg></button>
        </footer>
    </div>
</body>
</html>
```
FILE: styles.css
```css
* {
    box-sizing: border-box;
}

body {
    margin: 0;
    padding: 0 34px;
    background: #000;
    color: #1a1a1a;
    font-family: "Liberation Sans", Arial, sans-serif;
    font-size: 9px;
}

button {
    margin: 0;
    padding: 0;
    border: none;
    background: none;
    color: inherit;
    font: inherit;
}

a {
    color: inherit;
    text-decoration: none;
}

h1,
h2,
p {
    margin: 0;
    font-weight: normal;
}

h2 {
    font-size: 10px;
}

svg {
    display: block;
    flex: none;
    overflow: visible;
}

.defs {
    position: absolute;
    width: 0;
    height: 0;
}

.app {
    display: flex;
    flex-direction: column;
    height: 100vh;
    background: #f5f5f5;
    overflow: hidden;
}

/* Title bar and menu */
.titlebar {
    display: flex;
    align-items: center;
    height: 19px;
    padding-left: 2px;
    background: #ecf3f7;
}

.titlebar h1 {
    margin-left: 4px;
    font-family: "Noto Sans", "Open Sans", sans-serif;
    font-size: 9px;
}

.logo {
    width: 12px;
    height: 12px;
}

.window-buttons {
    display: flex;
    gap: 27px;
    margin-left: auto;
    padding-right: 15px;
}

.window-buttons svg {
    width: 10px;
    height: 10px;
}

.menubar {
    display: flex;
    align-items: center;
    height: 17px;
}

.menubar a {
    height: 17px;
    padding: 0 6px;
    line-height: 17px;
}

.menubar .active {
    border-bottom: 2px solid #2f86bf;
}

.add-tab svg {
    width: 10px;
    height: 10px;
    margin-left: 2px;
}

.help-buttons {
    display: flex;
    gap: 5px;
    margin-left: auto;
    padding-right: 15px;
}

.help-buttons svg {
    width: 12px;
    height: 12px;
}

/* Ribbon */
.ribbon {
    display: flex;
    height: 112px;
}

.ribbon-group {
    display: flex;
    flex-direction: column;
    padding: 8px 6px 0;
    border-right: 1px solid;
    border-image: linear-gradient(#ddd, #aaa) 1;
}

.ribbon-group:last-child {
    border: none;
}

.ribbon-home {
    width: 202px;
    padding-left: 0;
}

.ribbon-group h2 {
    margin-top: auto;
    padding-bottom: 3px;
    line-height: 13px;
    text-align: center;
}

.ribbon-items {
    display: flex;
}

.tool {
    display: flex;
    flex-direction: column;
    align-items: center;
    width: 63px;
    line-height: 11px;
}

.tool svg {
    width: 48px;
    height: 48px;
    margin-bottom: 8px;
}

.caret {
    display: inline-block;
    margin-left: 3px;
    border: 4px solid transparent;
    border-top: 5px solid #aaa;
    border-bottom: none;
}

/* Left panels */
.workspace {
    display: flex;
    flex: 1;
    min-height: 0;
}

.side {
    display: flex;
    flex-direction: column;
    width: 370px;
}

.panel-title {
    display: flex;
    align-items: center;
    gap: 7px;
    height: 23px;
    padding-right: 2px;
    color: #222;
}

.panel-title h2 {
    flex: 1;
}

.panel-title svg {
    width: 9px;
    height: 9px;
}

.output-title {
    height: 20px;
    margin-top: 6px;
}

.tree {
    display: grid;
    grid-template-columns: 1fr 10px;
    grid-template-rows: 238px 9px;
    margin: 3px 3px 0;
    border: 1px solid #c8c8c8;
    background: #fff;
}

.tree table {
    width: 100%;
    height: 238px;
    border-collapse: collapse;
    table-layout: fixed;
}

.col-name {
    width: 158px;
}

.col-color {
    width: 26px;
}

.col-link {
    width: 21px;
}

.col-prop {
    width: 79px;
}

.tree th {
    height: 16px;
    padding: 0 3px;
    background: #f5f5f5;
    border-right: 1px solid #d6d6d6;
    border-bottom: 1px solid #e2e2e2;
    font-weight: normal;
    text-align: left;
}

.tree th:last-child {
    border-right: none;
}

.tree td {
    padding: 0;
    line-height: 14px;
    white-space: nowrap;
}

.tree td svg {
    display: inline-block;
    margin-right: 4px;
    vertical-align: middle;
}

.ico12 {
    width: 12px;
    height: 12px;
}

.ico14 {
    width: 14px;
    height: 14px;
}

.tree .twist {
    width: 8px;
    height: 8px;
    margin-right: 6px;
}

.closed {
    transform: rotate(-90deg);
}

.tree .lvl1 td:first-child {
    padding-left: 19px;
}

.tree .lvl2 td:first-child {
    padding-left: 49px;
}

.muted {
    color: #8c8c8c;
}

.muted svg {
    opacity: .6;
}

.selected {
    background: #d9f3f9;
}

.tree .cell {
    display: flex;
    align-items: center;
}

.tree .cell svg {
    margin-right: 1px;
}

.focus {
    flex: 1;
    padding-left: 2px;
    border: 1px solid #7b95a0;
    line-height: 13px;
    font-weight: bold;
}

.swatch {
    display: block;
    width: 12px;
    height: 12px;
    margin-left: 6px;
    border: 1px solid rgba(0, 0, 0, .15);
}

.mount { background: #5f9696; }
.green { background: #00963c; }
.cyan { background: #00ffff; }
.blue { background: #0096e6; }
.lime { background: #64e600; }
.sky { background: #82afe1; }
.purple { background: #9646f0; }
.yellow { background: #dce100; }
.olive { background: #a0b414; }
.lilac { background: #aaa0c8; }

.vscroll,
.hscroll {
    display: flex;
    align-items: center;
    background: #f5f5f5;
}

.vscroll {
    flex-direction: column;
}

.vscroll svg,
.hscroll svg {
    width: 8px;
    height: 8px;
}

.vthumb {
    flex: 1;
    width: 100%;
    margin-top: 15px;
    background: #d9d9d9;
}

.hscroll {
    justify-content: space-between;
}

.hthumb {
    width: 274px;
    background: #dcdcdc;
}

.tabs {
    display: flex;
    height: 21px;
    padding: 2px 0 0 2px;
}

.tabs button {
    width: 39px;
    padding-left: 6px;
    border-bottom: 1px solid #ddd;
    border-left: 1px solid #ddd;
    background: linear-gradient(114deg, transparent 31px, #ccc 31px, #ccc 32px, transparent 32px);
}

.tabs .active {
    border-left: none;
    border-bottom-color: #2679a3;
}

.tabs svg {
    width: 16px;
    height: 16px;
}

.output {
    position: relative;
    flex: 1;
    margin-bottom: 2px;
    padding: 12px 3px;
    border: 1px solid #c8c8c8;
    border-left: none;
    background: #fff;
    font-family: "DejaVu Sans Condensed", "DejaVu Sans", sans-serif;
    font-size: 8px;
    line-height: 10px;
}

.output p {
    margin-bottom: 10px;
}

.pointer {
    position: absolute;
    top: 11px;
    right: 6px;
    width: 8px;
    height: 13px;
}

/* Model area */
.stage {
    display: flex;
    flex: 1;
    flex-direction: column;
    min-width: 0;
    padding-left: 9px;
}

.canvas-row {
    display: flex;
    flex: 1;
    min-height: 0;
    padding-top: 2px;
}

.pick-tools {
    width: 37px;
    padding-top: 2px;
}

.pick-tools button {
    display: flex;
    align-items: center;
    gap: 5px;
    height: 19px;
}

.pick-tools button svg {
    width: 17px;
    height: 17px;
}

.pick-tools button .flyout {
    width: 6px;
    height: 8px;
}

.faint {
    opacity: .5;
}

.ghost {
    opacity: .06;
}

.pick-tools hr {
    width: 17px;
    height: 1px;
    margin: 5px 0;
    border: none;
    background: #999;
}

.model {
    flex: 1;
    min-width: 0;
    height: 100%;
}

.hole ellipse {
    transform: rotate(8deg);
    transform-box: fill-box;
    transform-origin: center;
}

.hole ellipse:first-child {
    stroke: #c2392b;
}

.hole ellipse + ellipse {
    stroke: #222;
}

.axis {
    font: bold 11px "Noto Sans", sans-serif;
}

.doc-tabs {
    display: flex;
    height: 18px;
    padding-left: 37px;
}

.doc-tab {
    display: flex;
    align-items: center;
    gap: 9px;
    height: 18px;
    padding: 2px 3px 0 3px;
    border-bottom: 1px solid #3b7d96;
    border-left: 1px solid #ddd;
}

.doc-tab svg {
    width: 9px;
    height: 9px;
    color: #888;
}

.slant {
    width: 10px;
    height: 17px;
}

.doc-line {
    flex: 1;
    margin-top: 1px;
    margin-right: 106px;
    border-top: 1px solid #e2e2e2;
}

.view-tools {
    display: flex;
    gap: 3px;
    height: 32px;
    padding-top: 4px;
}

.view-tools button {
    height: 20px;
}

.view-tools svg {
    width: 20px;
    height: 20px;
}

/* Status bar */
.statusbar {
    display: flex;
    align-items: center;
    justify-content: flex-end;
    height: 20px;
}

.count {
    margin-left: 57px;
}

.unit-system {
    margin-left: 61px;
}

.units {
    display: flex;
    align-items: center;
    gap: 5px;
    margin-left: 19px;
    color: #999;
}

.units input {
    width: 23px;
    height: 12px;
    margin: 0;
    border-radius: 6px;
    background: radial-gradient(circle at 17px 6px, #f5f5f5 4px, #a9a9b4 5px);
    appearance: none;
}

.statusbar button {
    margin-left: 9px;
}

.statusbar button svg {
    width: 14px;
    height: 12px;
}
```
